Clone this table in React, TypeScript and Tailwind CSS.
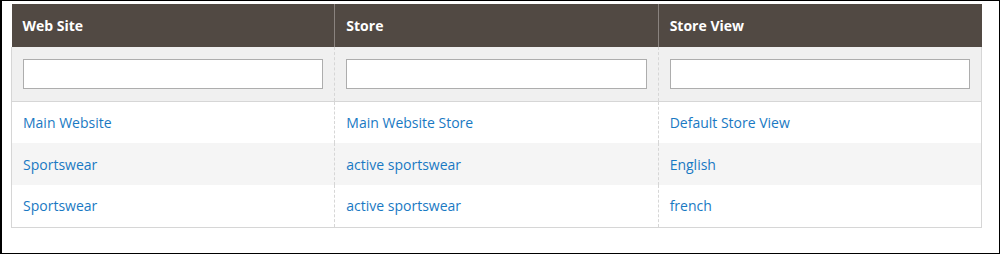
const rows = [
  { site: 'Main Website', store: 'Main Website Store', view: 'Default Store View' },
  { site: 'Sportswear', store: 'active sportswear', view: 'English' },
  { site: 'Sportswear', store: 'active sportswear', view: 'french' },
];

const columns = ['Web Site', 'Store', 'Store View'];

export default function App() {
  return (
    <div className="w-[1000px] h-[254px] border border-l-2 border-black bg-white font-['Open_Sans',sans-serif] pt-[3px] pl-[9px]">
      <table className="w-[971px] border-collapse table-fixed">
        <thead>
          <tr className="bg-[#514943] h-[43px]">
            {columns.map((col, i) => (
              <th
                key={col}
                className={`text-left text-[14px] font-bold text-white px-[11px] align-middle ${
                  i > 0 ? 'border-l border-[#8a837f]' : ''
                }`}
              >
                {col}
              </th>
            ))}
          </tr>
          <tr className="bg-[#f0f0f0] h-[54px] border-x border-b border-[#d6d6d6]">
            {columns.map((col, i) => (
              <td
                key={col}
                className={`px-[11px] align-middle ${
                  i > 0 ? 'border-l border-dashed border-[#d6d6d6]' : ''
                }`}
              >
                <input
                  type="text"
                  className="block w-full h-[30px] bg-white border border-[#adadad] outline-none"
                />
              </td>
            ))}
          </tr>
        </thead>
        <tbody className="border-x border-b border-[#d6d6d6]">
          {rows.map((row, r) => (
            <tr
              key={r}
              className={`h-[42px] ${r % 2 === 1 ? 'bg-[#f5f5f5]' : 'bg-white'}`}
            >
              {[row.site, row.store, row.view].map((val, i) => (
                <td
                  key={i}
                  className={`px-[11px] text-[14px] text-[#1979c3] align-middle ${
                    i > 0 ? 'border-l border-dashed border-[#d6d6d6]' : ''
                  }`}
                >
                  {val}
                </td>
              ))}
            </tr>
          ))}
        </tbody>
      </table>
    </div>
  );
}
